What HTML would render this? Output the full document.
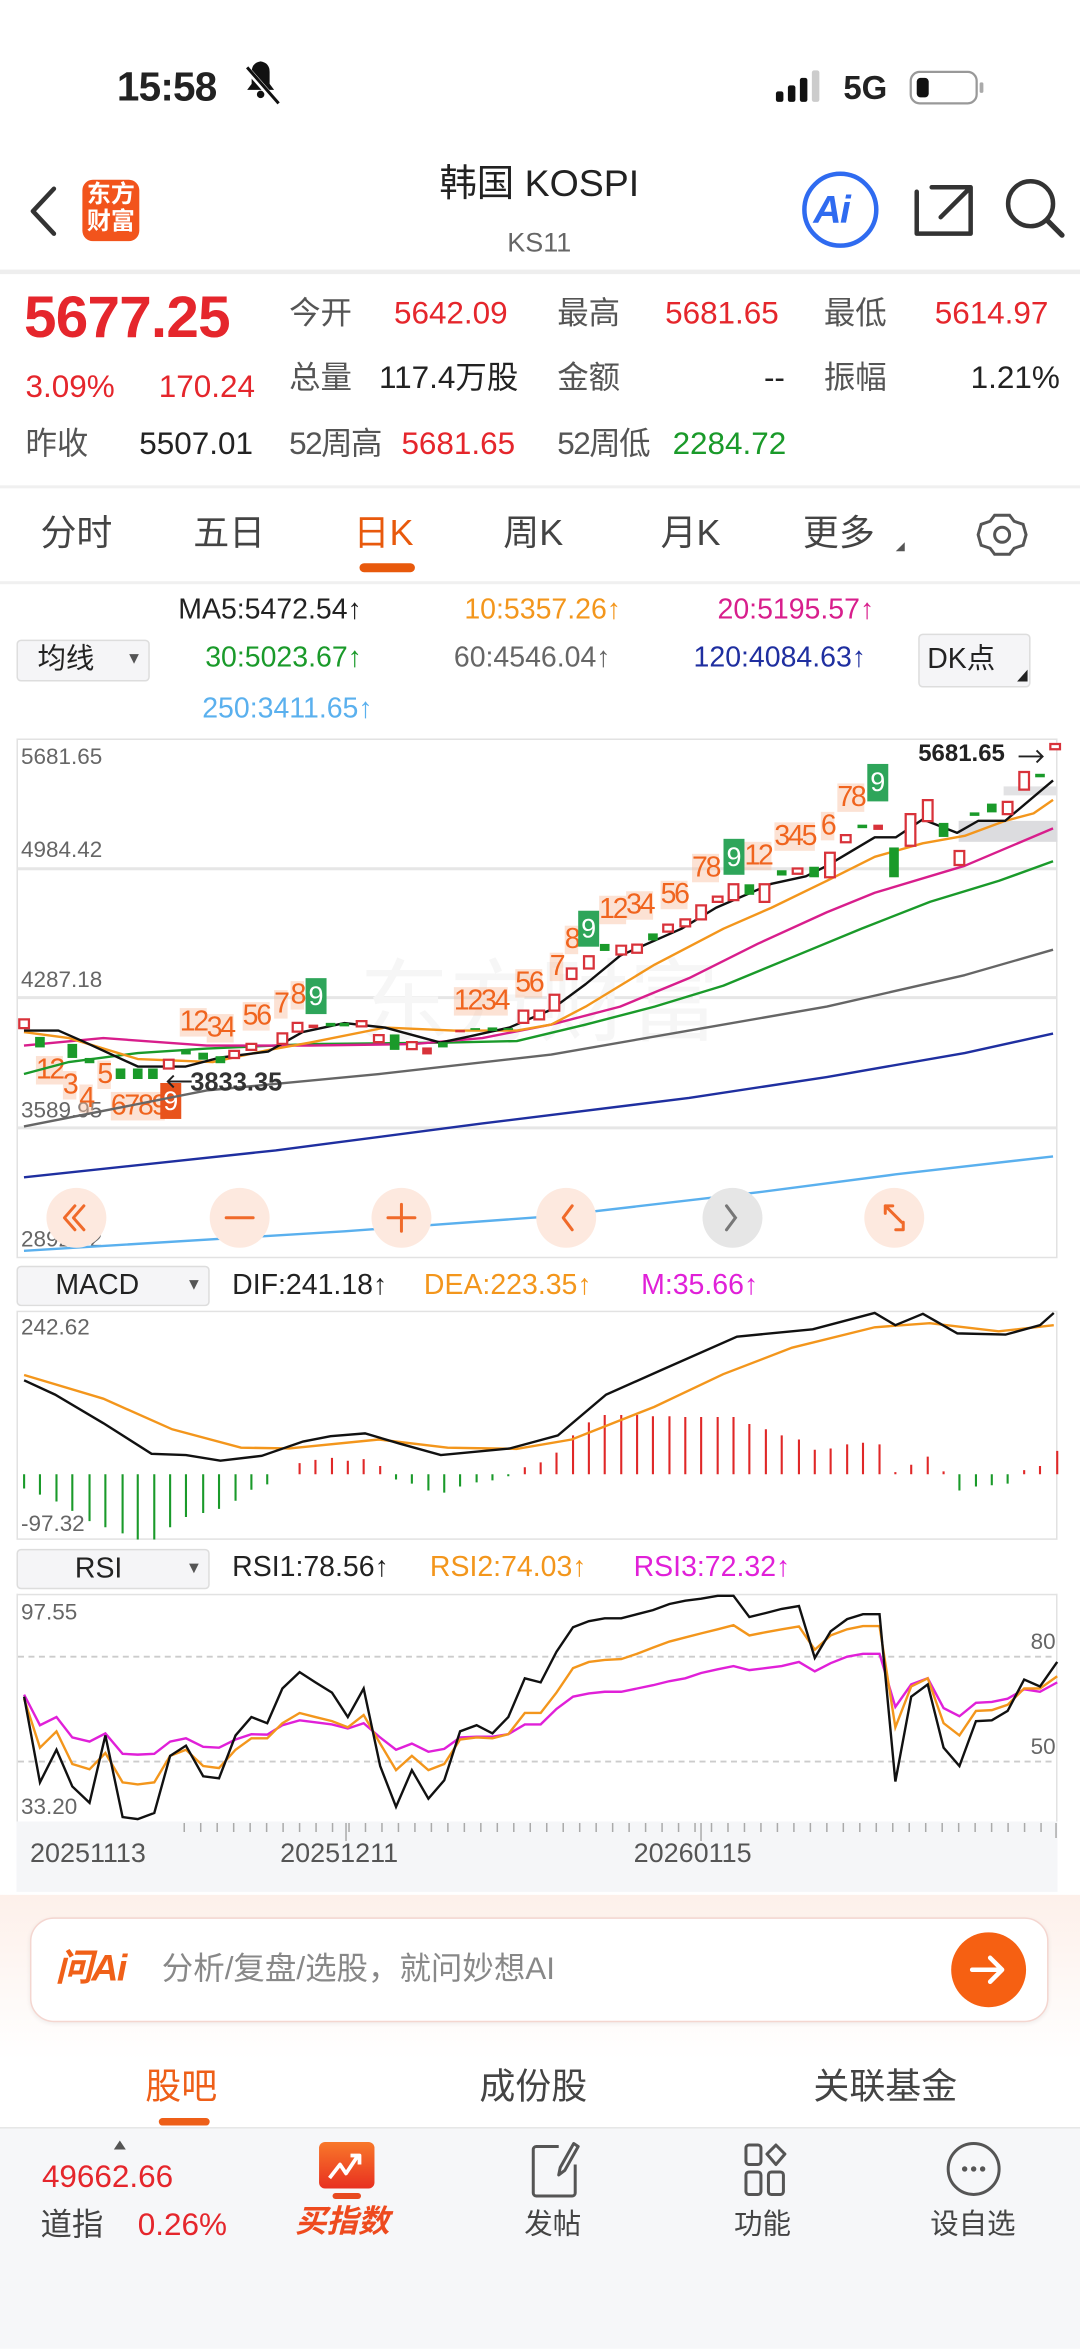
<!DOCTYPE html>
<html><head><meta charset="utf-8">
<style>
*{margin:0;padding:0;box-sizing:border-box}
html,body{width:1080px;height:2349px;overflow:hidden;background:#fff}
#s{position:absolute;left:0;top:0;width:721px;height:1568px;transform:scale(1.49792);transform-origin:0 0;font-family:"Liberation Sans","Noto Sans CJK SC",sans-serif;color:#222}
.t{position:absolute;white-space:nowrap;line-height:1}
.r{color:#e5262c}.g{color:#1a9a2a}.gy{color:#555}.o{color:#f3961c}.m{color:#d81e8c}
.td{position:absolute;line-height:1;font-size:19px;color:#f0641e;background:rgba(249,190,160,.45);white-space:nowrap;letter-spacing:-1.5px}
.b9{position:absolute;color:#fff;font-size:18px;line-height:1;text-align:center;padding-top:3px}
svg{position:absolute;left:0;top:0;overflow:visible}
.box{position:absolute;border:1px solid #ddd;border-radius:3px;background:#f5f5f7}
</style></head><body><div id="s">

<!-- status bar -->
<div class="t" style="left:78px;top:45px;font-size:27px;font-weight:bold;letter-spacing:-0.5px">15:58</div>
<svg width="721" height="120">
<g fill="#111"><path d="M168 48 q0-6 6-7 q6 1 6 7 v8 l3 4 h-18 l3-4z"/><circle cx="174" cy="63" r="2.5"/></g>
<line x1="164" y1="45" x2="186" y2="70" stroke="#fff" stroke-width="4"/><line x1="165" y1="45" x2="186" y2="69" stroke="#111" stroke-width="2"/>
<rect x="518" y="61" width="5" height="7" rx="1.5" fill="#111"/><rect x="526" y="57" width="5" height="11" rx="1.5" fill="#111"/><rect x="534" y="52" width="5" height="16" rx="1.5" fill="#111"/><rect x="542" y="47" width="5" height="21" rx="1.5" fill="#ccc"/>
<rect x="608" y="48" width="44" height="21" rx="6" fill="none" stroke="#999" stroke-width="1.5"/><rect x="612" y="52" width="8" height="13" rx="2.5" fill="#111"/><rect x="654" y="55" width="2.5" height="7" rx="1" fill="#aaa"/>
</svg>
<div class="t" style="left:563px;top:48px;font-size:22px;font-weight:bold">5G</div>

<!-- header -->
<svg width="721" height="200">
<path d="M36 126 L22 141 L36 156" fill="none" stroke="#333" stroke-width="3" stroke-linecap="round" stroke-linejoin="round"/>
<rect x="55" y="120" width="38" height="41" rx="7" fill="#f2541c"/>
<circle cx="561" cy="140" r="24" fill="none" stroke="#2f6bf0" stroke-width="3"/>
<path d="M612 128 v28 h36 v-17 M622 125 h26 v14 M646 127 l-18 18" fill="none" stroke="#333" stroke-width="3" stroke-linecap="round" stroke-linejoin="round"/>
<circle cx="688" cy="136" r="15" fill="none" stroke="#333" stroke-width="3"/><path d="M699 147 l10 10" stroke="#333" stroke-width="3.5" stroke-linecap="round"/>
</svg>
<div class="t" style="left:57px;top:122px;font-size:16px;font-weight:bold;color:#fff;line-height:18px;width:34px;text-align:center">东方<br>财富</div>
<div class="t" style="left:543px;top:127px;font-size:26px;font-weight:bold;font-style:italic;color:#2f6bf0;letter-spacing:-1px">Ai</div>
<div class="t" style="left:280px;top:111px;font-size:25px;width:160px;text-align:center">韩国 KOSPI</div>
<div class="t gy" style="left:290px;top:153px;font-size:18px;width:140px;text-align:center;color:#666">KS11</div>
<div style="position:absolute;left:0;top:180px;width:721px;height:3px;background:#eee"></div>

<!-- quote -->
<div class="t r" style="left:16px;top:193px;font-size:39px;font-weight:bold;letter-spacing:-0.5px">5677.25</div>
<div class="t gy" style="left:193px;top:199px;font-size:21px">今开</div>
<div class="t r" style="left:263px;top:199px;font-size:21px">5642.09</div>
<div class="t gy" style="left:372px;top:199px;font-size:21px">最高</div>
<div class="t r" style="left:444px;top:199px;font-size:21px">5681.65</div>
<div class="t gy" style="left:550px;top:199px;font-size:21px">最低</div>
<div class="t r" style="left:624px;top:199px;font-size:21px">5614.97</div>
<div class="t r" style="left:17px;top:248px;font-size:21px">3.09%</div>
<div class="t r" style="left:106px;top:248px;font-size:21px">170.24</div>
<div class="t gy" style="left:193px;top:242px;font-size:21px">总量</div>
<div class="t" style="left:253px;top:242px;font-size:21px">117.4万股</div>
<div class="t gy" style="left:372px;top:242px;font-size:21px">金额</div>
<div class="t" style="left:510px;top:242px;font-size:21px">--</div>
<div class="t gy" style="left:550px;top:242px;font-size:21px">振幅</div>
<div class="t" style="left:648px;top:242px;font-size:21px">1.21%</div>
<div class="t gy" style="left:17px;top:286px;font-size:21px">昨收</div>
<div class="t" style="left:93px;top:286px;font-size:21px">5507.01</div>
<div class="t gy" style="left:193px;top:286px;font-size:21px;letter-spacing:-1px">52周高</div>
<div class="t r" style="left:268px;top:286px;font-size:21px">5681.65</div>
<div class="t gy" style="left:372px;top:286px;font-size:21px;letter-spacing:-1px">52周低</div>
<div class="t g" style="left:449px;top:286px;font-size:21px">2284.72</div>
<div style="position:absolute;left:0;top:324px;width:721px;height:2px;background:#f0f0f0"></div>

<!-- tabs -->
<div class="t" style="left:27px;top:345px;font-size:24px;color:#444">分时</div>
<div class="t" style="left:129px;top:345px;font-size:24px;color:#444">五日</div>
<div class="t" style="left:236px;top:345px;font-size:24px;color:#e8590c">日K</div>
<div class="t" style="left:336px;top:345px;font-size:24px;color:#444">周K</div>
<div class="t" style="left:441px;top:345px;font-size:24px;color:#444">月K</div>
<div class="t" style="left:536px;top:345px;font-size:24px;color:#444">更多</div>
<svg width="721" height="400"><path d="M604 362 l-6 6 h6z" fill="#555"/>
<rect x="240" y="376" width="37" height="6" rx="3" fill="#e8590c"/>
<g transform="translate(669,357)" fill="none" stroke="#555" stroke-width="2"><path d="M-5 -13 h10 l3 4 l6 2 l2 7 l-2 7 l-6 2 l-3 4 h-10 l-3 -4 l-6 -2 l-2 -7 l2 -7 l6 -2z"/><circle r="5"/></g>
</svg>
<div style="position:absolute;left:0;top:388px;width:721px;height:2px;background:#f0f0f0"></div>

<!-- MA legend -->
<div class="t" style="left:119px;top:398px;font-size:19px">MA5:5472.54↑</div>
<div class="t o" style="left:310px;top:398px;font-size:19px">10:5357.26↑</div>
<div class="t m" style="left:479px;top:398px;font-size:19px">20:5195.57↑</div>
<div class="box" style="left:11px;top:427px;width:89px;height:28px"></div>
<div class="t" style="left:25px;top:431px;font-size:19px">均线</div>
<div class="t" style="left:84px;top:435px;font-size:11px;color:#555">▼</div>
<div class="t g" style="left:137px;top:430px;font-size:19px">30:5023.67↑</div>
<div class="t" style="left:303px;top:430px;font-size:19px;color:#666">60:4546.04↑</div>
<div class="t" style="left:463px;top:430px;font-size:19px;color:#1f2fa0">120:4084.63↑</div>
<div class="box" style="left:613px;top:423px;width:75px;height:36px"></div>
<div class="t" style="left:619px;top:431px;font-size:19px">DK点</div>
<svg width="721" height="500"><path d="M686 447 l-7 8 h7z" fill="#222"/></svg>
<div class="t" style="left:135px;top:464px;font-size:19px;color:#5ab0ee">250:3411.65↑</div>

<!-- main chart -->
<div style="position:absolute;left:11px;top:493px;width:695px;height:347px;border:1px solid #e2e2e2"></div>
<svg width="721" height="1568">
<g stroke="#e6e6e6" stroke-width="2"><line x1="12" y1="580" x2="705" y2="580"/><line x1="12" y1="666" x2="705" y2="666"/><line x1="12" y1="753" x2="705" y2="753"/></g>
<rect x="640" y="548" width="66" height="14" fill="#dcdcdf"/>
<rect x="670" y="525" width="36" height="6" fill="#e2e2e4"/>
<text x="240" y="690" font-size="60" fill="#f6f6f6" font-family="Liberation Sans,Noto Sans CJK SC,sans-serif">东方财富</text>
</svg>
<div class="t gy" style="left:14px;top:498px;font-size:15px;color:#666">5681.65</div>
<div class="t gy" style="left:14px;top:560px;font-size:15px;color:#666">4984.42</div>
<div class="t gy" style="left:14px;top:647px;font-size:15px;color:#666">4287.18</div>
<div class="t gy" style="left:14px;top:734px;font-size:15px;color:#666">3589.95</div>
<div class="t gy" style="left:14px;top:820px;font-size:15px;color:#666">2892.72</div>

<!-- TD labels -->
<span class="td" style="left:24px;top:705px">12</span><span class="td" style="left:42px;top:715px">3</span><span class="td" style="left:53px;top:724px">4</span><span class="td" style="left:65px;top:708px">5</span><span class="td" style="left:74px;top:729px">6789</span>
<div class="b9" style="left:107px;top:723px;width:14px;height:24px;background:#e8531c">9</div>
<span class="td" style="left:120px;top:673px">12</span><span class="td" style="left:138px;top:677px">34</span><span class="td" style="left:162px;top:669px">56</span><span class="td" style="left:183px;top:661px">7</span><span class="td" style="left:194px;top:655px">8</span>
<div class="b9" style="left:204px;top:653px;width:14px;height:24px;background:#2ea55a">9</div>
<span class="td" style="left:303px;top:659px">1234</span><span class="td" style="left:344px;top:647px">56</span><span class="td" style="left:367px;top:636px">7</span><span class="td" style="left:377px;top:618px">8</span>
<div class="b9" style="left:386px;top:608px;width:14px;height:24px;background:#2ea55a">9</div>
<span class="td" style="left:400px;top:598px">12</span><span class="td" style="left:418px;top:595px">34</span><span class="td" style="left:441px;top:588px">56</span><span class="td" style="left:462px;top:570px">78</span>
<div class="b9" style="left:483px;top:560px;width:14px;height:24px;background:#2ea55a">9</div>
<span class="td" style="left:497px;top:562px">12</span><span class="td" style="left:517px;top:549px">345</span><span class="td" style="left:548px;top:542px">6</span><span class="td" style="left:559px;top:523px">78</span>
<div class="b9" style="left:579px;top:510px;width:14px;height:25px;background:#2ea55a">9</div>

<svg width="721" height="1568">
<g fill="none" stroke-width="1.6" stroke-linejoin="round">
<polyline stroke="#5ab0ee" points="16,835 230,822 368,812 506,796 598,784 703,772"/>
<polyline stroke="#1f2fa0" points="16,786 184,768 322,750 460,733 552,719 644,703 703,690"/>
<polyline stroke="#666" points="16,752 138,728 253,717 368,704 460,688 552,672 644,651 703,634"/>
<polyline stroke="#1a9a2a" points="16,717 46,709 92,703 138,700 207,697 299,696 345,695 391,684 437,672 483,658 529,639 575,620 621,602 667,588 703,575"/>
<polyline stroke="#d81e8c" points="16,698 69,693 138,698 207,698 276,697 322,693 368,684 414,672 460,653 506,630 552,609 584,596 644,578 703,553"/>
<polyline stroke="#f3961c" points="16,689 46,693 92,707 142,709 179,701 207,696 257,686 303,688 345,688 368,684 391,672 437,644 483,620 515,606 552,588 584,572 616,563 644,558 671,548 690,543 703,534"/>
<polyline stroke="#111" points="16,688 39,688 55,695 92,712 124,712 147,706 179,702 202,689 230,683 257,686 294,696 313,692 340,686 368,674 391,657 414,638 455,620 478,606 515,590 538,585 552,578 584,559 598,559 616,547 639,556 653,548 671,548 703,521"/>
</g>
<g transform="translate(0,487.3) scale(0.4598,0.2342)">
<g fill="#fff" stroke="#d8323a" stroke-width="1.5" vector-effect="non-scaling-stroke">
<rect x="28" y="825" width="14" height="25" vector-effect="non-scaling-stroke"/><rect x="238" y="940" width="14" height="25" vector-effect="non-scaling-stroke"/><rect x="333" y="915" width="14" height="20" vector-effect="non-scaling-stroke"/><rect x="358" y="895" width="14" height="17" vector-effect="non-scaling-stroke"/><rect x="403" y="865" width="14" height="30" vector-effect="non-scaling-stroke"/><rect x="425" y="835" width="14" height="25" vector-effect="non-scaling-stroke"/><rect x="518" y="830" width="14" height="15" vector-effect="non-scaling-stroke"/><rect x="543" y="870" width="14" height="20" vector-effect="non-scaling-stroke"/><rect x="591" y="890" width="14" height="20" vector-effect="non-scaling-stroke"/><rect x="753" y="800" width="14" height="35" vector-effect="non-scaling-stroke"/><rect x="776" y="800" width="14" height="25" vector-effect="non-scaling-stroke"/><rect x="798" y="755" width="14" height="45" vector-effect="non-scaling-stroke"/><rect x="823" y="680" width="14" height="30" vector-effect="non-scaling-stroke"/><rect x="848" y="645" width="14" height="35" vector-effect="non-scaling-stroke"/><rect x="895" y="615" width="14" height="25" vector-effect="non-scaling-stroke"/><rect x="918" y="612" width="14" height="23" vector-effect="non-scaling-stroke"/><rect x="963" y="555" width="14" height="20" vector-effect="non-scaling-stroke"/><rect x="988" y="540" width="14" height="20" vector-effect="non-scaling-stroke"/><rect x="1011" y="500" width="14" height="40" vector-effect="non-scaling-stroke"/><rect x="1035" y="475" width="14" height="15" vector-effect="non-scaling-stroke"/><rect x="1058" y="440" width="14" height="45" vector-effect="non-scaling-stroke"/><rect x="1103" y="440" width="14" height="50" vector-effect="non-scaling-stroke"/><rect x="1151" y="395" width="14" height="15" vector-effect="non-scaling-stroke"/><rect x="1198" y="350" width="14" height="70" vector-effect="non-scaling-stroke"/><rect x="1221" y="300" width="14" height="20" vector-effect="non-scaling-stroke"/><rect x="1315" y="240" width="14" height="90" vector-effect="non-scaling-stroke"/><rect x="1340" y="200" width="14" height="60" vector-effect="non-scaling-stroke"/><rect x="1386" y="345" width="14" height="40" vector-effect="non-scaling-stroke"/><rect x="1456" y="205" width="14" height="35" vector-effect="non-scaling-stroke"/><rect x="1480" y="120" width="14" height="50" vector-effect="non-scaling-stroke"/><rect x="1525" y="40" width="14" height="15" vector-effect="non-scaling-stroke"/>
</g>
<g fill="#d8323a"><rect x="448" y="840" width="14" height="10"/><rect x="613" y="905" width="14" height="20"/><rect x="661" y="855" width="14" height="7"/><rect x="1268" y="270" width="14" height="15"/></g>
<g fill="#1a9a2a"><rect x="51" y="875" width="14" height="30"/><rect x="98" y="895" width="14" height="40"/><rect x="123" y="935" width="14" height="15"/><rect x="168" y="965" width="14" height="30"/><rect x="193" y="965" width="14" height="30"/><rect x="215" y="965" width="14" height="30"/><rect x="263" y="910" width="14" height="15"/><rect x="288" y="920" width="14" height="20"/><rect x="313" y="930" width="14" height="20"/><rect x="473" y="835" width="14" height="10"/><rect x="493" y="835" width="14" height="10"/><rect x="566" y="868" width="14" height="44"/><rect x="636" y="890" width="14" height="15"/><rect x="683" y="850" width="14" height="5"/><rect x="708" y="848" width="14" height="10"/><rect x="731" y="850" width="14" height="5"/><rect x="871" y="610" width="14" height="20"/><rect x="941" y="580" width="14" height="20"/><rect x="1081" y="440" width="14" height="30"/><rect x="1128" y="400" width="14" height="15"/><rect x="1175" y="390" width="14" height="30"/><rect x="1245" y="270" width="14" height="10"/><rect x="1291" y="335" width="14" height="85"/><rect x="1363" y="265" width="14" height="40"/><rect x="1408" y="235" width="14" height="10"/><rect x="1433" y="210" width="14" height="25"/><rect x="1503" y="125" width="14" height="10"/></g>
</g>
<g fill="none" stroke="#222" stroke-width="1.3"><path d="M680 505 h16 M692 501 l4 4 l-4 4"/><path d="M112 722 h16 M116 718 l-4 4 l4 4"/></g>
<!-- chart buttons -->
<g><circle cx="51" cy="813" r="20" fill="#fde9df"/><circle cx="160" cy="813" r="20" fill="#fde9df"/><circle cx="268" cy="813" r="20" fill="#fde9df"/><circle cx="378" cy="813" r="20" fill="#fde9df"/><circle cx="489" cy="813" r="20" fill="#e6e6e6"/><circle cx="597" cy="813" r="20" fill="#fde9df"/></g>
<g fill="none" stroke="#f06a2a" stroke-width="2" stroke-linecap="round" stroke-linejoin="round">
<path d="M50 805 l-7 8 l7 8 M56 805 l-7 8 l7 8"/><path d="M151 813 h18"/><path d="M259 813 h18 M268 804 v18"/><path d="M382 805 l-6 8 l6 8"/><path d="M591 805 l11 11 M591 805 v5 M591 805 h5 M603 821 v-5 M603 821 h-5"/></g>
<path d="M485 805 l6 8 l-6 8" fill="none" stroke="#777" stroke-width="2" stroke-linecap="round"/>
</svg>
<div class="t" style="left:613px;top:496px;font-size:16px;font-weight:bold;color:#222">5681.65</div>
<div class="t" style="left:127px;top:714px;font-size:17px;font-weight:bold;color:#333">3833.35</div>

<!-- MACD -->
<div class="box" style="left:11px;top:845px;width:129px;height:27px"></div>
<div class="t" style="left:37px;top:849px;font-size:19px">MACD</div>
<div class="t" style="left:124px;top:853px;font-size:11px;color:#555">▼</div>
<div class="t" style="left:155px;top:849px;font-size:19px">DIF:241.18↑</div>
<div class="t o" style="left:283px;top:849px;font-size:19px">DEA:223.35↑</div>
<div class="t" style="left:428px;top:849px;font-size:19px;color:#e020d8">M:35.66↑</div>
<div style="position:absolute;left:11px;top:875px;width:695px;height:153px;border:1px solid #e2e2e2"></div>
<div class="t" style="left:14px;top:879px;font-size:15px;color:#666">242.62</div>
<div class="t" style="left:14px;top:1010px;font-size:15px;color:#666">-97.32</div>
<svg width="721" height="1568">
<g transform="translate(0,841.1) scale(0.4598,0.2725)" fill="none">
<path stroke="#1a9a2a" stroke-width="1.4" vector-effect="non-scaling-stroke" d="M35 525V560M58 525V575M82 525V592M105 525V615M130 525V640M153 525V655M178 525V670M200 525V685M224 525V685M247 525V655M270 525V630M295 525V620M318 525V610M342 525V590M365 525V563M388 525V550M575 525V538M598 525V548M622 525V565M645 525V570M668 525V555M692 525V545M715 525V540M738 525V530M1393 525V565M1417 525V555M1440 525V552M1463 525V548"/>
<path stroke="#e02828" stroke-width="1.4" vector-effect="non-scaling-stroke" d="M435 525V498M458 525V490M482 525V485M505 525V492M528 525V488M552 525V505M762 525V508M785 525V496M808 525V472M832 525V430M855 525V398M878 525V380M902 525V380M925 525V380M948 525V383M972 525V383M995 525V385M1018 525V385M1042 525V385M1065 525V385M1088 525V402M1112 525V415M1135 525V430M1160 525V440M1183 525V465M1206 525V462M1230 525V452M1253 525V448M1277 525V452M1300 525V520M1323 525V502M1347 525V482M1370 525V518M1487 525V515M1510 525V505M1535 525V468"/>
<polyline stroke="#f3961c" stroke-width="1.6" vector-effect="non-scaling-stroke" points="35,282 150,340 250,415 350,460 420,462 550,440 650,460 750,463 830,440 950,360 1050,280 1150,215 1270,165 1350,155 1450,175 1530,160"/>
<polyline stroke="#111" stroke-width="1.6" vector-effect="non-scaling-stroke" points="35,295 80,330 150,400 220,475 270,478 320,492 380,480 440,445 480,432 530,425 580,450 640,478 740,462 810,430 880,330 960,270 1070,188 1180,170 1270,130 1300,160 1340,132 1390,180 1460,183 1510,160 1530,130"/>
</g></svg>

<!-- RSI -->
<div class="box" style="left:11px;top:1034px;width:129px;height:27px"></div>
<div class="t" style="left:50px;top:1038px;font-size:19px">RSI</div>
<div class="t" style="left:124px;top:1042px;font-size:11px;color:#555">▼</div>
<div class="t" style="left:155px;top:1037px;font-size:19px">RSI1:78.56↑</div>
<div class="t o" style="left:287px;top:1037px;font-size:19px">RSI2:74.03↑</div>
<div class="t" style="left:423px;top:1037px;font-size:19px;color:#e020d8">RSI3:72.32↑</div>
<div style="position:absolute;left:11px;top:1064px;width:695px;height:153px;border:1px solid #e2e2e2;border-bottom:none"></div>
<div style="position:absolute;left:11px;top:1216px;width:695px;height:47px;background:#f5f6f8"></div>
<div class="t" style="left:14px;top:1069px;font-size:15px;color:#666">97.55</div>
<div class="t" style="left:14px;top:1199px;font-size:15px;color:#666">33.20</div>
<div class="t" style="left:688px;top:1089px;font-size:15px;color:#666">80</div>
<div class="t" style="left:688px;top:1159px;font-size:15px;color:#666">50</div>
<svg width="721" height="1568">
<g stroke="#ccc" stroke-width="1.2" stroke-dasharray="4,3"><line x1="12" y1="1106" x2="705" y2="1106"/><line x1="12" y1="1176" x2="705" y2="1176"/></g>
<g transform="translate(0,841.1) scale(0.4598,0.2725)" fill="none" stroke-width="1.6">
<polyline stroke="#e020d8" vector-effect="non-scaling-stroke" points="35,1065 58,1140 82,1120 105,1170 130,1180 153,1160 178,1210 200,1212 224,1210 247,1180 270,1172 295,1193 318,1195 342,1175 365,1162 388,1163 410,1140 435,1128 458,1133 482,1138 505,1148 528,1135 552,1170 575,1200 598,1185 622,1205 645,1198 668,1170 692,1168 715,1168 738,1162 762,1138 785,1138 808,1100 832,1070 855,1062 878,1058 902,1058 925,1050 948,1042 972,1032 995,1025 1018,1012 1042,1003 1065,995 1088,1005 1112,1000 1135,995 1160,985 1183,1008 1206,988 1230,972 1253,965 1277,965 1300,1095 1323,1040 1347,1025 1370,1098 1393,1118 1417,1085 1440,1083 1463,1075 1487,1052 1510,1058 1535,1035"/>
<polyline stroke="#f3961c" vector-effect="non-scaling-stroke" points="35,1075 58,1195 82,1155 105,1235 130,1248 153,1208 178,1280 200,1285 224,1280 247,1215 270,1200 295,1240 318,1245 342,1200 365,1172 388,1172 410,1135 435,1110 458,1120 482,1130 505,1145 528,1115 552,1185 575,1250 598,1215 622,1250 645,1235 668,1175 692,1170 715,1172 738,1162 762,1110 785,1110 808,1060 832,1000 855,985 878,980 902,978 925,965 948,950 972,935 995,925 1018,915 1042,905 1065,895 1088,920 1112,912 1135,905 1160,898 1183,955 1206,920 1230,905 1253,897 1277,897 1300,1145 1323,1045 1347,1025 1370,1135 1393,1165 1417,1105 1440,1103 1463,1090 1487,1050 1510,1050 1535,1020"/>
<polyline stroke="#111" vector-effect="non-scaling-stroke" points="35,1070 58,1280 82,1200 105,1290 130,1330 153,1165 178,1365 200,1370 224,1355 247,1215 270,1190 295,1265 318,1270 342,1165 365,1120 388,1135 410,1050 435,1010 458,1035 482,1060 505,1120 528,1050 552,1240 575,1340 598,1250 622,1320 645,1275 668,1155 692,1140 715,1160 738,1120 762,1025 785,1035 808,960 832,900 855,885 878,878 902,878 925,868 948,858 972,843 995,835 1018,830 1042,823 1065,823 1088,875 1112,865 1135,855 1160,848 1183,975 1206,910 1230,880 1253,868 1277,868 1300,1278 1323,1070 1347,1040 1370,1195 1393,1240 1417,1130 1440,1128 1463,1105 1487,1028 1510,1045 1535,985"/>
</g>
<path stroke="#aaa" stroke-width="1" d="M123 1217v6M134 1217v6M145 1217v6M156 1217v6M167 1217v6M178 1217v6M189 1217v6M200 1217v6M211 1217v6M222 1217v6M233 1217v6M244 1217v6M255 1217v6M266 1217v6M277 1217v6M288 1217v6M299 1217v6M310 1217v6M321 1217v6M332 1217v6M343 1217v6M354 1217v6M365 1217v6M376 1217v6M387 1217v6M398 1217v6M409 1217v6M420 1217v6M431 1217v6M442 1217v6M453 1217v6M464 1217v6M475 1217v6M486 1217v6M497 1217v6M508 1217v6M519 1217v6M530 1217v6M541 1217v6M552 1217v6M563 1217v6M574 1217v6M585 1217v6M596 1217v6M607 1217v6M618 1217v6M629 1217v6M640 1217v6M651 1217v6M662 1217v6M673 1217v6M684 1217v6M695 1217v6M705 1217v10M231 1217v12M468 1217v12"/>
</svg>
<div class="t" style="left:20px;top:1228px;font-size:18px;color:#555">20251113</div>
<div class="t" style="left:187px;top:1228px;font-size:18px;color:#555">20251211</div>
<div class="t" style="left:423px;top:1228px;font-size:18px;color:#555">20260115</div>

<!-- AI search -->
<div style="position:absolute;left:0;top:1265px;width:721px;height:110px;background:linear-gradient(180deg,#fdf0ea,#fff)"></div>
<div style="position:absolute;left:20px;top:1280px;width:680px;height:70px;border-radius:16px;background:#fff;border:1.5px solid #f4d6d0;box-shadow:0 1px 3px rgba(0,0,0,.06)"></div>
<div class="t" style="left:37px;top:1302px;font-size:25px;font-weight:bold;font-style:italic;color:#f06018;letter-spacing:-1px">问Ai</div>
<div class="t" style="left:108px;top:1304px;font-size:21px;color:#888">分析/复盘/选股，就问妙想AI</div>
<svg width="721" height="1568"><circle cx="660" cy="1315" r="25" fill="#f66012"/><path d="M649 1315 h20 M661 1307 l8 8 l-8 8" fill="none" stroke="#fff" stroke-width="3" stroke-linecap="round" stroke-linejoin="round"/></svg>

<!-- bottom tabs -->
<div class="t" style="left:97px;top:1382px;font-size:24px;color:#ee5f18">股吧</div>
<div class="t" style="left:320px;top:1382px;font-size:24px;color:#444">成份股</div>
<div class="t" style="left:543px;top:1382px;font-size:24px;color:#444">关联基金</div>
<div style="position:absolute;left:0;top:1420px;width:721px;height:148px;background:#f6f7f9;border-top:1px solid #e6e6e6"></div>
<div style="position:absolute;left:106px;top:1414px;width:34px;height:5px;border-radius:3px;background:#ee5f18"></div>

<!-- nav -->
<svg width="721" height="1568">
<path d="M76 1435 l4 -6 l4 6z" fill="#555"/>
<defs><linearGradient id="gr" x1="0" y1="0" x2="0" y2="1"><stop offset="0" stop-color="#f8782a"/><stop offset="1" stop-color="#e83020"/></linearGradient></defs>
<rect x="213" y="1430" width="37" height="31" rx="4" fill="url(#gr)"/><rect x="222" y="1464" width="19" height="4" rx="2" fill="#e84a20"/>
<path d="M220 1454 l7 -9 l4 6 l8 -12 M234 1439 h6 v6" fill="none" stroke="#fff" stroke-width="2.5" stroke-linejoin="round"/>
<g fill="none" stroke="#555" stroke-width="2" stroke-linejoin="round">
<path d="M373 1433 h-15 a2 2 0 0 0 -2 2 v29 a2 2 0 0 0 2 2 h24 a2 2 0 0 0 2 -2 v-19"/><path d="M383 1431 l-9 16 l-1 5 l4 -3 l9 -16z"/>
<rect x="498" y="1432" width="10" height="13" rx="2"/><rect x="498" y="1450" width="10" height="15" rx="2"/><rect x="513" y="1450" width="10" height="15" rx="2"/><path d="M518 1432 l6 6 l-6 7 l-6 -7z"/>
<circle cx="650" cy="1448" r="17"/></g>
<g fill="#555"><circle cx="644" cy="1448" r="1.8"/><circle cx="650" cy="1448" r="1.8"/><circle cx="656" cy="1448" r="1.8"/></g>
</svg>
<div class="t r" style="left:28px;top:1443px;font-size:21px">49662.66</div>
<div class="t" style="left:27px;top:1475px;font-size:21px;color:#444">道指</div>
<div class="t r" style="left:92px;top:1475px;font-size:21px">0.26%</div>
<div class="t" style="left:197px;top:1473px;font-size:21px;font-weight:bold;font-style:italic;color:#ee4a1e">买指数</div>
<div class="t" style="left:350px;top:1476px;font-size:19px;color:#444">发帖</div>
<div class="t" style="left:490px;top:1476px;font-size:19px;color:#444">功能</div>
<div class="t" style="left:621px;top:1476px;font-size:19px;color:#444">设自选</div>

</div></body></html>
